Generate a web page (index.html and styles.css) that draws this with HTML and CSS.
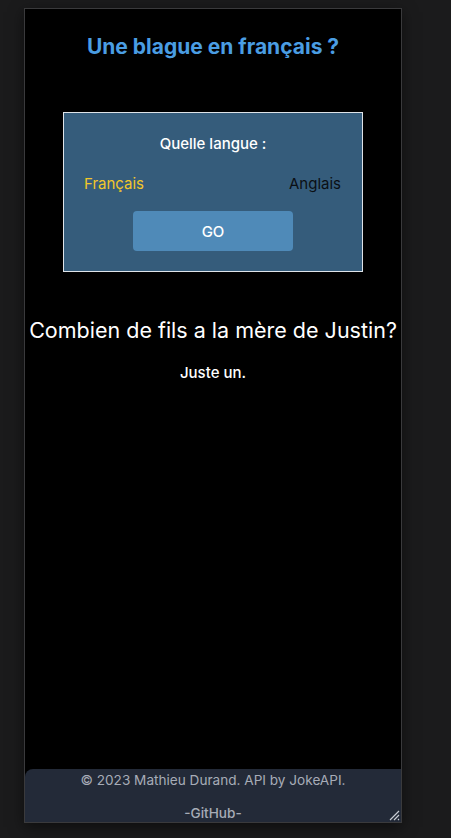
FILE: index.html
```html
<!DOCTYPE html>
<html lang="fr">
<head>
<meta charset="utf-8">
<title>Blague</title>
<link rel="stylesheet" href="styles.css">
</head>
<body>
<div class="frame">
  <h1 class="title">Une blague en français ?</h1>
  <div class="card">
    <p class="card-label">Quelle langue :</p>
    <div class="langs">
      <span class="lang lang-active">Français</span>
      <span class="lang">Anglais</span>
    </div>
    <button class="go">GO</button>
  </div>
  <p class="joke">Combien de fils a la mère de Justin?</p>
  <p class="answer">Juste un.</p>
  <div class="spacer"></div>
  <footer class="footer">
    <p class="footer-line">© 2023 Mathieu Durand. API by JokeAPI.</p>
    <p class="footer-line footer-link">-GitHub-</p>
  </footer>
  <svg class="grip" width="12" height="12" viewBox="0 0 12 12">
    <path d="M11 2 L2 11 M11 6 L6 11 M11 10 L10 11" stroke="#c8ccd4" stroke-width="1.2"/>
  </svg>
</div>
</body>
</html>
```
FILE: styles.css
```css
html, body {
  margin: 0;
  padding: 0;
  background: #1b1b1c;
  height: 100%;
  overflow: hidden;
}
body {
  padding: 8px 0 0 24px;
  font-family: Inter, "Noto Sans", sans-serif;
}
.frame {
  position: relative;
  width: 376px;
  height: 813px;
  border: 1px solid #3a3a3c;
  background: #000;
  display: flex;
  flex-direction: column;
  align-items: center;
  overflow: hidden;
  box-shadow: 0 4px 14px rgba(0,0,0,0.5);
}
.title {
  margin: 26px 0 0;
  font-size: 21px;
  line-height: 24px;
  font-weight: 700;
  color: #4a9de3;
}
.card {
  margin-top: 53px;
  width: 298px;
  height: 158px;
  border: 1px solid #dfe3e8;
  background: #355c7b;
  display: flex;
  flex-direction: column;
  align-items: center;
}
.card-label {
  margin: 21px 0 0;
  font-size: 15px;
  line-height: 20px;
  font-weight: 500;
  color: #fff;
}
.langs {
  align-self: stretch;
  display: flex;
  justify-content: space-between;
  padding: 0 21px 0 20px;
  margin-top: 20px;
}
.lang {
  font-size: 15px;
  line-height: 20px;
  color: #0b0f14;
}
.lang-active {
  color: #f2c72a;
}
.go {
  margin-top: 17px;
  width: 160px;
  height: 40px;
  border: none;
  border-radius: 4px;
  background: #4f8ab8;
  color: #fff;
  font-family: Inter, "Noto Sans", sans-serif;
  font-size: 15px;
  font-weight: 500;
}
.joke {
  margin: 44px 0 0;
  font-size: 21.5px;
  line-height: 28px;
  color: #fff;
  white-space: nowrap;
}
.answer {
  margin: 19px 0 0;
  font-size: 15px;
  line-height: 20px;
  font-weight: 500;
  color: #fff;
}
.spacer {
  flex: 1;
}
.footer {
  align-self: stretch;
  margin-bottom: -12px;
  height: 65px;
  flex: none;
  background: #232a38;
  border-radius: 8px 0 0 8px;
  display: flex;
  flex-direction: column;
  align-items: center;
}
.footer-line {
  margin: 2px 0 0;
  font-size: 13.6px;
  line-height: 18px;
  color: #a7acb7;
}
.footer-link {
  margin-top: 15px;
  font-weight: 500;
}
.grip {
  position: absolute;
  right: 1px;
  bottom: 1px;
}
```
